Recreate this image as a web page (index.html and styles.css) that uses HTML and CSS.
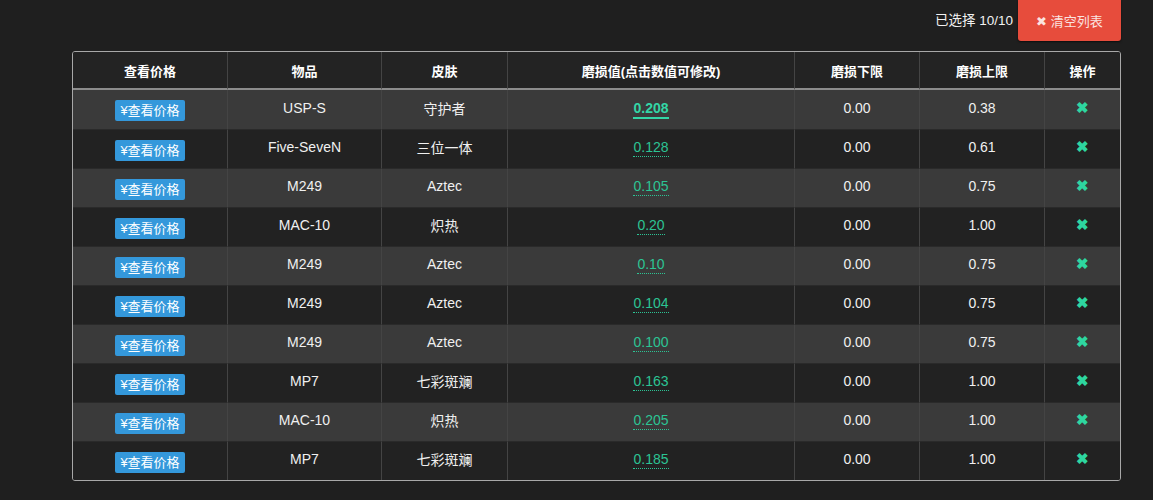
FILE: index.html
```html
<!DOCTYPE html>
<html lang="zh">
<head>
<meta charset="UTF-8">
<title>磨损值列表</title>
<link rel="stylesheet" href="styles.css">
</head>
<body>
    <div class="container">
        <div class="top-bar">
            <span class="selected">已选择 10/10</span>
            <a class="clear-button" href="#">&#10006; 清空列表</a>
        </div>
        <table class="wear-table">
            <thead>
                <tr>
                    <th class="col-price">查看价格</th>
                    <th class="col-item">物品</th>
                    <th class="col-skin">皮肤</th>
                    <th class="col-wear">磨损值(点击数值可修改)</th>
                    <th class="col-min">磨损下限</th>
                    <th class="col-max">磨损上限</th>
                    <th class="col-op">操作</th>
                </tr>
            </thead>
            <tbody id="rows"></tbody>
        </table>
    </div>

    <script>
        const rows = [
            ['USP-S', '守护者', '0.208', '0.00', '0.38'],
            ['Five-SeveN', '三位一体', '0.128', '0.00', '0.61'],
            ['M249', 'Aztec', '0.105', '0.00', '0.75'],
            ['MAC-10', '炽热', '0.20', '0.00', '1.00'],
            ['M249', 'Aztec', '0.10', '0.00', '0.75'],
            ['M249', 'Aztec', '0.104', '0.00', '0.75'],
            ['M249', 'Aztec', '0.100', '0.00', '0.75'],
            ['MP7', '七彩斑斓', '0.163', '0.00', '1.00'],
            ['MAC-10', '炽热', '0.205', '0.00', '1.00'],
            ['MP7', '七彩斑斓', '0.185', '0.00', '1.00']
        ];

        const tbody = document.getElementById('rows');
        rows.forEach((r, i) => {
            const tr = document.createElement('tr');
            const linkClass = i === 0 ? 'wear-link active' : 'wear-link';
            tr.innerHTML = `
                <td><a class="price-button" href="#">¥查看价格</a></td>
                <td>${r[0]}</td>
                <td>${r[1]}</td>
                <td><a class="${linkClass}" href="#">${r[2]}</a></td>
                <td>${r[3]}</td>
                <td>${r[4]}</td>
                <td><span class="remove">&#10006;</span></td>`;
            tbody.appendChild(tr);
        });
    </script>
</body>
</html>
```

FILE: styles.css
```css
body, html {
    margin: 0;
    padding: 0;
    height: 100%;
    overflow: hidden;
}

body {
    font-family: "Liberation Sans", "Noto Sans CJK SC", sans-serif;
    background: #1f1f1f;
    color: #f0f0f0;
}

.container {
    width: 1049px;
    margin-left: 72px;
}

.top-bar {
    display: flex;
    justify-content: flex-end;
    align-items: center;
    gap: 5px;
    height: 41px;
    margin-bottom: 10px;
}

.selected {
    font-size: 13.5px;
    color: #f2f2f2;
    padding-bottom: 3px;
}

.clear-button {
    display: flex;
    align-items: center;
    justify-content: center;
    width: 103px;
    height: 41px;
    background: #e74c3c;
    color: #fbe3e0;
    font-size: 13px;
    text-decoration: none;
    border-radius: 0 0 3px 3px;
    box-shadow: 0 1px 2px rgba(0, 0, 0, 0.6);
}

.wear-table {
    width: 1049px;
    border-collapse: separate;
    border-spacing: 0;
    border: 1px solid #a8a8a8;
    border-radius: 3px;
    overflow: hidden;
    font-size: 14px;
    table-layout: fixed;
}

.wear-table th,
.wear-table td {
    box-sizing: border-box;
    padding: 0;
    text-align: center;
    border-left: 1px solid #444;
}

.wear-table th {
    background: #232323;
    color: #fff;
    font-size: 13px;
    font-weight: bold;
    height: 38px;
    border-bottom: 2px solid #8c8c8c;
}

.wear-table td {
    height: 39px;
    padding-bottom: 4px;
    border-top: 1px solid #2a2a2a;
    color: #f0f0f0;
}

.wear-table th:first-child,
.wear-table td:first-child {
    border-left: none;
}

.wear-table tbody tr:first-child td {
    border-top: none;
}

.wear-table tbody tr:nth-child(odd) td {
    background: #3a3a3a;
}

.wear-table tbody tr:nth-child(even) td {
    background: #222;
}

.col-price { width: 154px; }
.col-item { width: 154px; }
.col-skin { width: 126px; }
.col-wear { width: 287px; }
.col-min { width: 125px; }
.col-max { width: 125px; }

.price-button {
    display: inline-block;
    position: relative;
    top: 3px;
    padding: 0 5px;
    height: 21px;
    line-height: 21px;
    font-size: 13px;
    background: #3498db;
    color: #fff;
    text-decoration: none;
    border-radius: 2px;
}

.wear-link {
    color: #2cc494;
    text-decoration: none;
    border-bottom: 1px dotted #2cc494;
    padding-bottom: 1px;
}

.wear-link.active {
    font-weight: bold;
    color: #33d6a6;
    border-bottom: 2px solid #33d6a6;
}

.remove {
    color: #2ed6a0;
    font-size: 15px;
    font-weight: bold;
}
```
